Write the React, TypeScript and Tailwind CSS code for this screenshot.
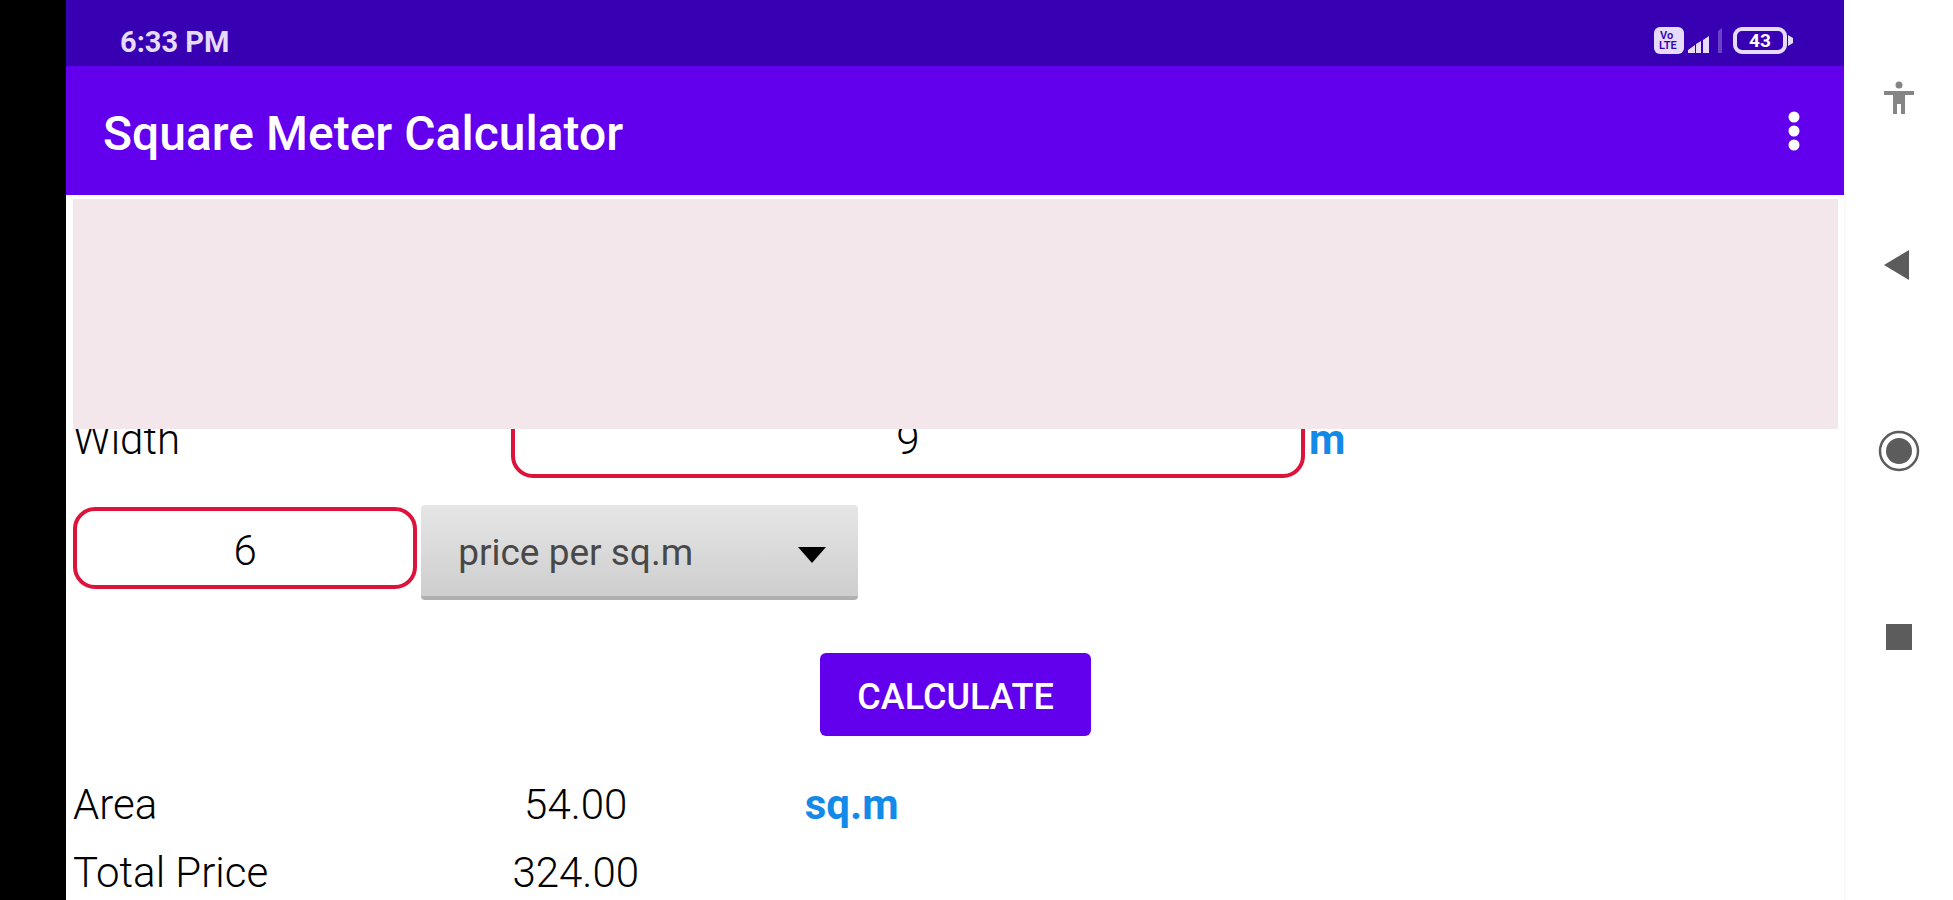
import { useState } from "react";

const fieldClass =
  "h-[82px] rounded-[22px] border-4 border-[#dc143c] bg-white pt-1 text-center text-[42px] font-light text-black outline-none";

const StatusBar = () => (
  <div className="flex h-[66px] items-center justify-between bg-[#3700b3] pt-[18px] pr-[50px] pl-[54px] text-[#e6dcfa]">
    <span className="text-[29px] leading-8 font-bold">6:33 PM</span>
    <div className="flex items-center pb-1">
      <svg width="30" height="27" viewBox="0 0 30 27" aria-hidden="true">
        <rect x="0" y="0" width="30" height="27" rx="6" fill="currentColor" />
        <g fill="#3700b3" fontSize="11" fontWeight="600">
          <text x="6" y="12">Vo</text>
          <text x="5" y="22">LTE</text>
        </g>
      </svg>
      <svg width="36" height="28" viewBox="0 0 36 28" className="ml-1" aria-hidden="true">
        <path d="M0 27V24L7 19V27Z M8 27V18L13 15V27Z M15 27V14L21 10V27Z" fill="currentColor" />
        <path d="M30 27V5L34 2V27Z" fill="currentColor" opacity="0.3" />
      </svg>
      <svg width="62" height="28" viewBox="0 0 62 28" className="ml-2" aria-hidden="true">
        <rect x="3" y="3" width="50" height="23" rx="7" fill="none" stroke="currentColor" strokeWidth="4" />
        <path d="M56 9L61 12V17L56 20Z" fill="currentColor" />
        <text x="17" y="21" fill="#fff" fontSize="19" fontWeight="700">43</text>
      </svg>
    </div>
  </div>
);

const AppBar = () => (
  <header className="flex h-[129px] items-center justify-between bg-[#6200ee] pr-[35px] pl-[37px] text-white">
    <h1 className="pt-1.5 text-[48px] leading-[56px] font-medium">Square Meter Calculator</h1>
    <button type="button" aria-label="More options" className="flex h-12 w-[30px] items-center justify-center">
      <svg width="14" height="42" viewBox="0 0 14 42" fill="currentColor">
        <circle cx="7" cy="7" r="5.5" />
        <circle cx="7" cy="21" r="5.5" />
        <circle cx="7" cy="35" r="5.5" />
      </svg>
    </button>
  </header>
);

const NavRail = () => (
  <nav className="flex w-[109px] shrink-0 flex-col border-l-2 border-[#fafafa] bg-white pr-0.5 text-[#5c5c5c]">
    <button type="button" aria-label="Accessibility" className="flex h-[172px] items-center justify-center pt-6">
      <svg width="32" height="34" viewBox="0 0 32 34" fill="#858585">
        <circle cx="16" cy="4" r="3.5" />
        <path d="M1 10H31V14H22V33H18V23H14V33H10V14H1Z" />
      </svg>
    </button>
    <button type="button" aria-label="Back" className="flex h-[186px] items-center justify-center">
      <svg width="32" height="32" viewBox="0 0 32 32" fill="currentColor">
        <path d="M1 16L26 1V31Z" />
      </svg>
    </button>
    <button type="button" aria-label="Home" className="flex h-[186px] items-center justify-center">
      <svg width="44" height="44" viewBox="0 0 44 44">
        <circle cx="22" cy="22" r="19" fill="none" stroke="currentColor" strokeWidth="2.5" />
        <circle cx="22" cy="22" r="13" fill="currentColor" />
      </svg>
    </button>
    <button type="button" aria-label="Recent apps" className="flex h-[186px] items-center justify-center">
      <svg width="28" height="28" viewBox="0 0 28 28" fill="currentColor">
        <rect x="1" y="1" width="26" height="26" />
      </svg>
    </button>
  </nav>
);

export default function App() {
  const [width, setWidth] = useState("9");
  const [price, setPrice] = useState("6");
  const [result, setResult] = useState({ area: 54, total: 324 });
  const length = 6;

  const calculate = () => {
    const area = length * Number(width);
    setResult({ area, total: area * Number(price) });
  };

  return (
    <div className="flex h-screen overflow-hidden bg-white font-[Roboto,sans-serif]">
      <div className="w-[66px] shrink-0 bg-black" />
      <div className="flex min-w-0 flex-1 flex-col">
        <StatusBar />
        <AppBar />
        <main className="flex min-h-0 flex-1 flex-col pt-1 pr-[6px] pl-[7px]">
          <div className="h-[230px] shrink-0 bg-[#f3e7eb]" />
          <div className="min-h-0 flex-1 overflow-hidden text-[42px] font-light text-black">
            {/* list is scrolled, so the first row is cut by the banner */}
            <div className="-mt-[33px] flex h-[82px] items-center">
              <label htmlFor="width" className="w-[24.8%] pt-1">
                Width
              </label>
              <input
                id="width"
                className={`${fieldClass} w-[45%]`}
                value={width}
                onChange={(e) => setWidth(e.target.value)}
              />
              <span className="ml-1 pt-1 font-bold text-[#1389e8]">m</span>
            </div>
            <div className="mt-[27px] flex items-baseline gap-1">
              <input
                aria-label="Price"
                className={`${fieldClass} w-[19.5%]`}
                value={price}
                onChange={(e) => setPrice(e.target.value)}
              />
              <div className="relative w-[24.75%]">
                <select
                  aria-label="Price unit"
                  className="h-[95px] w-full appearance-none rounded-sm border-b-4 border-[#b0b0b0] bg-linear-to-b from-[#e6e6e6] to-[#cecece] pt-1 pl-[37px] text-[37px] font-normal text-[#484848]"
                >
                  <option>price per sq.m</option>
                </select>
                <svg
                  width="28"
                  height="16"
                  viewBox="0 0 28 16"
                  className="pointer-events-none absolute top-[42px] right-8"
                  aria-hidden="true"
                >
                  <path d="M0 0H28L14 16Z" />
                </svg>
              </div>
            </div>
            <div className="mt-[53px] flex justify-center">
              <button
                type="button"
                onClick={calculate}
                className="h-[83px] rounded-md bg-[#6200ee] px-[37px] pt-1 text-[36px] font-medium text-white"
              >
                CALCULATE
              </button>
            </div>
            <table className="mt-[34px] w-full table-fixed">
              <tbody>
                <tr className="h-[68px]">
                  <th scope="row" className="w-[24.8%] text-left font-light">
                    Area
                  </th>
                  <td className="w-[130px] text-center">{result.area.toFixed(2)}</td>
                  <td className="pl-[164px] font-bold text-[#1389e8]">sq.m</td>
                </tr>
                <tr className="h-[68px]">
                  <th scope="row" className="text-left font-light">
                    Total Price
                  </th>
                  <td className="text-center">{result.total.toFixed(2)}</td>
                  <td />
                </tr>
              </tbody>
            </table>
          </div>
        </main>
      </div>
      <NavRail />
    </div>
  );
}
